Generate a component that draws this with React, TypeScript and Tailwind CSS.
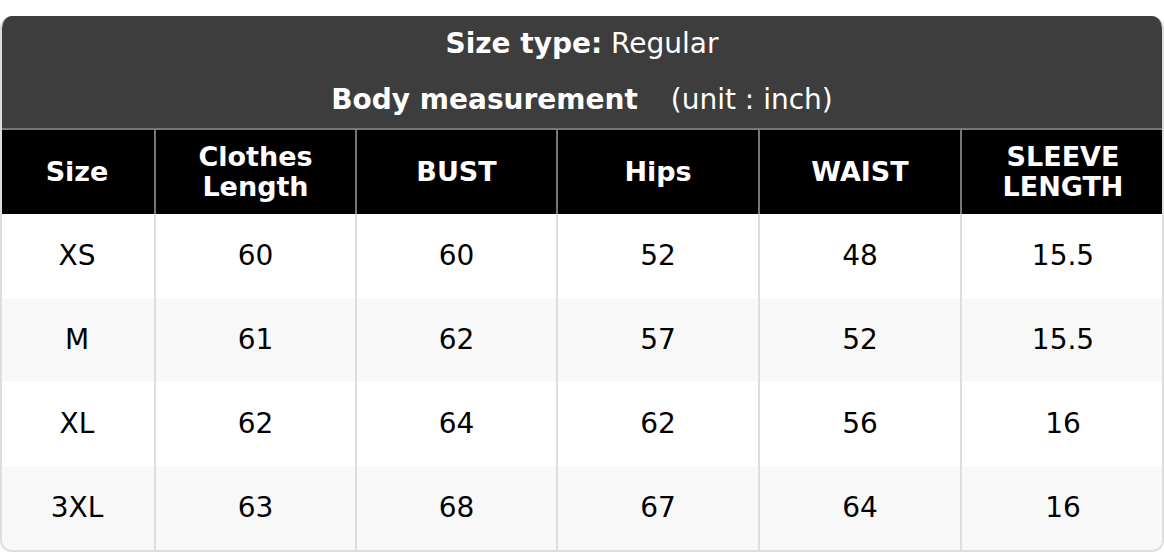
import React from "react";

const headers: string[][] = [
  ["Size"],
  ["Clothes", "Length"],
  ["BUST"],
  ["Hips"],
  ["WAIST"],
  ["SLEEVE", "LENGTH"],
];

const rows: string[][] = [
  ["XS", "60", "60", "52", "48", "15.5"],
  ["M", "61", "62", "57", "52", "15.5"],
  ["XL", "62", "64", "62", "56", "16"],
  ["3XL", "63", "68", "67", "64", "16"],
];

const cols = "grid grid-cols-[154px_201px_201px_202px_202px_1fr]";

export default function App() {
  return (
    <div className="w-[1164px] h-[552px] bg-white pt-4" style={{ fontFamily: '"DejaVu Sans", sans-serif' }}>
      <div className="rounded-xl overflow-hidden border-2 border-t-0 border-[#dddddd] bg-white">
        <div className="bg-[#3d3d3d] text-white text-center text-[28px]">
          <div className="h-[56px] flex items-center justify-center">
            <span className="font-bold">Size type:</span>
            <span>&nbsp;Regular</span>
          </div>
          <div className="h-[56px] flex items-center justify-center">
            <span className="font-bold">Body measurement</span>
            <span className="ml-[33px]">(unit : inch)</span>
          </div>
        </div>
        <div className={`${cols} bg-black text-white font-bold text-[27px] leading-[30px] border-t-2 border-[#767676] -mx-[2px]`}>
          {headers.map((h, i) => (
            <div
              key={i}
              className={`h-[84px] flex flex-col items-center justify-center text-center ${i > 0 ? "border-l-2 border-[#767676]" : ""}`}
            >
              {h.map((l) => (
                <div key={l}>{l}</div>
              ))}
            </div>
          ))}
        </div>
        {rows.map((r, ri) => (
          <div key={ri} className={`${cols} -mx-[2px] text-[28px] text-black ${ri % 2 ? "bg-[#f8f8f8]" : "bg-white"}`}>
            {r.map((c, ci) => (
              <div
                key={ci}
                className={`h-[84px] flex items-center justify-center ${ci > 0 ? "border-l-2 border-[#dddddd]" : ""}`}
              >
                {c}
              </div>
            ))}
          </div>
        ))}
      </div>
    </div>
  );
}
